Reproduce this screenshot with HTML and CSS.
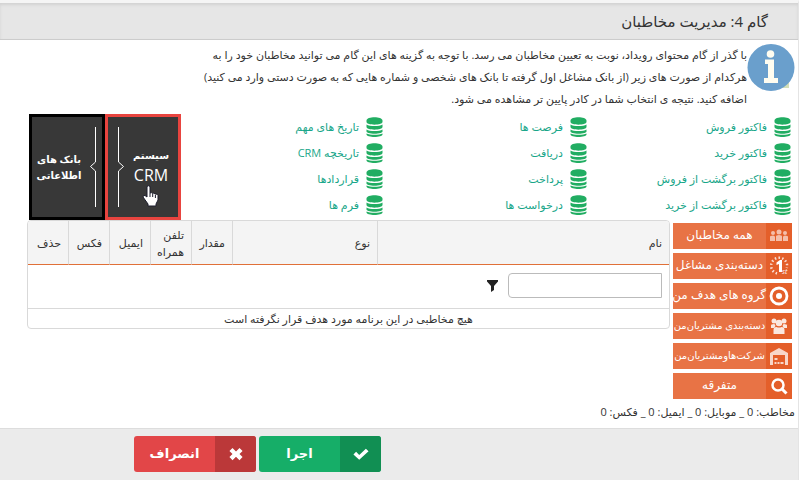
FILE: index.html
```html
<!DOCTYPE html>
<html lang="fa" dir="rtl">
<head>
<meta charset="utf-8">
<title>مدیریت مخاطبان</title>
<link rel="stylesheet" href="styles.css">
</head>
<body>
<svg class="defs" aria-hidden="true">
  <symbol id="db" viewBox="0 0 16 20">
    <path d="M0 3.500C0-1 16-1 16 3.500V5C16 8.500 0 8.500 0 5ZM0 7.500C3 9.500 13 9.500 16 7.500V10C16 13.500 0 13.500 0 10ZM0 12.500C3 14.500 13 14.500 16 12.500V14.500C16 15 15 15.800 14 16 11 17 5 17 2 16 1 15.800 0 15 0 14.500ZM0 16.500C3 18.300 13 18.300 16 16.500V17.500C16 20.800 0 20.800 0 17.500Z"/>
  </symbol>
</svg>
<div class="page">
  <header class="title-bar"><h1>گام 4: مدیریت مخاطبان</h1></header>
  <main>
    <section class="intro">
      <svg class="info" viewBox="0 0 48 48" aria-hidden="true">
        <path fill="#d3dfb8" d="M35 36h7v8h-7z"/>
        <circle cx="24" cy="23.500" r="23.500" fill="#6a9fcc"/>
        <circle cx="23.500" cy="10" r="3.800" fill="#fffdf0"/>
        <path fill="#fffdf0" d="M18 15.500h9V34h4v5H17v-5h4V20h-3z"/>
      </svg>
      <p>با گذر از گام محتوای رویداد، نوبت به تعیین مخاطبان می رسد. با توجه به گزینه های این گام می توانید مخاطبان خود را به<br>هرکدام از صورت های زیر (از بانک مشاغل اول گرفته تا بانک های شخصی و شماره هایی که به صورت دستی وارد می کنید)<br>اضافه کنید. نتیجه ی انتخاب شما در کادر پایین تر مشاهده می شود.</p>
    </section>
    <section class="sources">
      <ul class="links">
        <li><a href="#"><svg><use href="#db"/></svg>فاکتور فروش</a></li>
        <li><a href="#"><svg><use href="#db"/></svg>فاکتور خرید</a></li>
        <li><a href="#"><svg><use href="#db"/></svg>فاکتور برگشت از فروش</a></li>
        <li><a href="#"><svg><use href="#db"/></svg>فاکتور برگشت از خرید</a></li>
        <li><a href="#"><svg><use href="#db"/></svg>فرصت ها</a></li>
        <li><a href="#"><svg><use href="#db"/></svg>دریافت</a></li>
        <li><a href="#"><svg><use href="#db"/></svg>پرداخت</a></li>
        <li><a href="#"><svg><use href="#db"/></svg>درخواست ها</a></li>
        <li><a href="#"><svg><use href="#db"/></svg>تاریخ های مهم</a></li>
        <li><a href="#"><svg><use href="#db"/></svg>تاریخچه CRM</a></li>
        <li><a href="#"><svg><use href="#db"/></svg>قراردادها</a></li>
        <li><a href="#"><svg><use href="#db"/></svg>فرم ها</a></li>
      </ul>
      <div class="tiles">
        <button type="button" class="tile tile-active">
          <span>سیستم<b>CRM</b></span>
          <svg class="rule" viewBox="0 0 8 80"><path d="M1.500 0V35L6.500 39.500 1.500 44V80"/></svg>
          <svg class="hand" viewBox="0 0 17 22"><path d="M5 1.500Q6.500 0 8 1.500V8Q9.500 7 10.500 8.500 12 7.500 13 9 15 8.500 16 10.500V15L14 19V21H6V19L1 12Q1 10 3 10.500L5 12Z" fill="#fff" stroke="#1c1d2c"/><path d="M8 8v4M10.700 9v3M13.400 10v3" stroke="#1c1d2c" fill="none"/></svg>
        </button>
        <button type="button" class="tile">
          <svg class="rule" viewBox="0 0 8 80"><path d="M6.500 0V35L1.500 39.500 6.500 44V80"/></svg>
          <span>بانک های<br>اطلاعاتی</span>
        </button>
      </div>
    </section>
    <section class="audience">
      <nav class="groups">
        <button type="button"><i><svg viewBox="0 0 20 20" opacity=".6"><circle cx="4" cy="7" r="2"/><circle cx="10" cy="6" r="2.500"/><circle cx="16" cy="7" r="2"/><path d="M1 15v-4q0-1.500 3-1.500 2 0 2 1.500v4zM7 15v-4.500Q7 9 10 9t3 1.500V15zM14 15v-4q0-1.500 2-1.500 3 0 3 1.500v4z"/></svg></i><span>همه مخاطبان</span></button>
        <button type="button"><i><svg viewBox="0 0 20 20"><path d="M8 17.500A8 8 0 1 1 17.800 12" fill="none" stroke="#fff" stroke-width="2.500" stroke-dasharray="1.500 2.200" opacity=".8"/><path d="M7.500 6.500L11 4h2v12h-3V8l-2.500 1z"/><text x="13" y="18" font-size="7" direction="ltr">st</text></svg></i><span>دسته‌بندی مشاغل</span></button>
        <button type="button"><i><svg viewBox="0 0 20 20"><circle cx="10" cy="10" r="8" fill="none" stroke="#fff" stroke-width="2.800"/><circle cx="10" cy="10" r="3"/></svg></i><span>گروه های هدف من</span></button>
        <button type="button" class="small"><i><svg viewBox="0 0 20 20" opacity=".85"><circle cx="5" cy="5" r="2.500"/><circle cx="15" cy="5" r="2.500"/><circle cx="10" cy="7" r="3.300"/><path d="M2 12V9.500Q2 8 5 8q1.200 0 1.500 2L5 12zM18 12V9.500Q18 8 15 8q-1.200 0-1.500 2l1.500 2zM4.500 18v-4q0-3 3-3 2.500 1.200 5 0 3 0 3 3v4z"/></svg></i><span>دسته‌بندی مشتریان‌من</span></button>
        <button type="button" class="small"><i><svg viewBox="0 0 20 20" opacity=".75"><path d="M1 19V7l9-5 9 5v12h-3V9H4v10zM5.500 12h3v2h-3zM5.500 16h2v2h-2zM8.500 16h2v2h-2zM11.500 16h3v2h-3z"/></svg></i><span>شرکت‌هاومشتریان‌من</span></button>
        <button type="button"><i><svg viewBox="0 0 20 20"><g fill="none" stroke="#fff"><circle cx="9" cy="9" r="5.500" stroke-width="2.500"/><path d="M13 13l4.500 4.500" stroke-width="3"/></g></svg></i><span>متفرقه</span></button>
      </nav>
      <div class="grid-box">
        <table>
          <colgroup><col><col class="c-type"><col class="c-sm"><col class="c-sm"><col class="c-sm"><col class="c-sm"><col class="c-last"></colgroup>
          <thead><tr><th>نام</th><th>نوع</th><th>مقدار</th><th>تلفن همراه</th><th>ایمیل</th><th>فکس</th><th>حذف</th></tr></thead>
          <tbody>
            <tr class="filter"><td colspan="7"><div class="filter-row"><input type="text" aria-label="نام"><button type="button" aria-label="فیلتر"><svg viewBox="0 0 11 12"><path d="M0 0h11v1.500L7 6v4l-3 2V6L0 1.500z"/></svg></button></div></td></tr>
            <tr class="empty"><td colspan="7">هیچ مخاطبی در این برنامه مورد هدف قرار نگرفته است</td></tr>
          </tbody>
        </table>
      </div>
    </section>
    <p class="status">مخاطب: 0 _ موبایل: 0 _ ایمیل: 0 _ فکس: 0</p>
  </main>
  <footer>
    <button type="button" class="run"><i><svg viewBox="0 0 18 14"><path d="M3.500 4.500L7 8l7.500-7L17.500 4 7 13.500.5 7.500z"/></svg></i><span>اجرا</span></button>
    <button type="button" class="cancel"><i><svg viewBox="0 0 16 16"><path d="M4 1l4 4 4-4 3.500 3.500L12 8l3.500 3.500L12 15l-4-4-4 4-3.500-3.500L4 8 .5 4.500z"/></svg></i><span>انصراف</span></button>
  </footer>
</div>
</body>
</html>
```

FILE: styles.css
```css
* { box-sizing: border-box; }
body {
  margin: 0;
  background: #fff;
  color: #333;
  font: 12px/22px "Open Sans", "DejaVu Sans", sans-serif;
}
button, input { font: inherit; margin: 0; }
button { padding: 0; border: 0; cursor: pointer; }
p, h1, ul { margin: 0; padding: 0; }
svg { display: block; flex: none; }
.defs { position: absolute; width: 0; height: 0; }
.page {
  min-height: 100vh;
  display: flex;
  flex-direction: column;
  border-top: 3px solid #f5f5f5;
  border-right: 1px solid #e4e4e4;
}
.title-bar {
  padding: 4px 30px 4px 0;
  border-bottom: 1px solid #ccc;
  background: #e6e6e6;
  box-shadow: inset 0 2px 3px #d2d2d2;
}
h1 { font-size: 15px; line-height: 28px; font-weight: 400; }
main { flex: 1; padding: 4px 3px 0 27px; }
.intro { display: flex; height: 70px; white-space: nowrap; }
.info { width: 48px; height: 48px; }
.intro p { font-size: 11px; }
.sources { display: flex; justify-content: space-between; height: 106px; }
.links {
  display: grid;
  grid-template-rows: repeat(4, 26px);
  grid-auto-columns: 204px;
  grid-auto-flow: column;
  padding-right: 4px;
  width: 612px;
  list-style: none;
}
.links a {
  display: flex;
  align-items: center;
  gap: 7px;
  height: 26px;
  color: #18a689;
  font-size: 11px;
  text-decoration: none;
  white-space: nowrap;
}
.links svg { width: 17px; height: 20px; fill: #21ad62; }
.tiles {
  display: flex;
  flex: none;
  margin-left: 2px;
  margin-right: -100px;
}
.tile {
  position: relative;
  display: flex;
  align-items: center;
  justify-content: center;
  gap: 8px;
  width: 76px;
  border: 3px solid #000;
  background: #383838;
  color: #fff;
  font-size: 10px;
  font-weight: 700;
  line-height: 16px;
}
.tile-active { border-color: #e8443f; }
.tile b { display: block; font-size: 16px; line-height: 24px; font-weight: 400; }
.rule { width: 8px; height: 80px; fill: none; stroke: #fff; }
.hand { position: absolute; left: 34px; top: 68px; width: 17px; height: 22px; }
.audience { display: flex; gap: 3px; padding-right: 3px; }
.groups { display: flex; flex-direction: column; gap: 4px; width: 119px; padding-top: 3px; flex: none; }
.groups button {
  display: flex;
  height: 26px;
  background: #e87345;
  color: #fff;
  line-height: 24px;
  font-size: 12px;
  white-space: nowrap;
}
.groups i { width: 26px; height: 26px; padding: 3px; background: #e45f2a; flex: none; }
.groups i svg { width: 20px; height: 20px; fill: #fff; }
.groups span { flex: 1; min-width: 0; }
.groups .small { font-size: 10px; }
.grid-box {
  flex: 1;
  align-self: flex-start;
  border: 1px solid #d9d9d9;
  border-radius: 4px;
  overflow: hidden;
}
table { width: 100%; table-layout: fixed; border-collapse: separate; border-spacing: 0; }
.c-sm { width: 41px; }
.c-last { width: 40px; }
.c-type { width: 145px; }
th {
  height: 44px;
  padding: 2px 7px;
  background: #f4f4f4;
  border-left: 1px solid #d9d9d9;
  border-bottom: 1px solid #e07038;
  font-size: 11px;
  font-weight: 400;
  line-height: 17px;
  text-align: right;
}
th:last-child { border-left: 0; }
td { padding: 0; }
.filter td { height: 44px; border-bottom: 1px solid #d9d9d9; }
.filter-row { display: flex; align-items: center; gap: 10px; padding: 0 7px 2px; }
.filter input { width: 154px; height: 25px; border: 1px solid #bbb; border-radius: 4px 0 0 4px; }
.filter button { background: none; }
.filter button svg { width: 11px; height: 12px; fill: #222; }
.empty td { height: 19px; font-size: 11px; line-height: 19px; text-align: center; }
.status { padding: 2px 0 5px; font-size: 11px; }
footer {
  display: flex;
  justify-content: flex-end;
  gap: 3px;
  height: 52px;
  padding: 7px 0 0 134px;
  border-top: 1px solid #ddd;
  background: #ebebeb;
}
footer button { display: flex; width: 122px; height: 36px; border-radius: 3px; overflow: hidden; color: #fff; font-size: 13px; font-weight: 700; line-height: 34px; }
footer i { display: flex; align-items: center; justify-content: center; width: 41px; height: 36px; }
footer i svg { width: 16px; height: 14px; fill: #fff; }
footer span { flex: 1; }
.run { background: #16ae68; }
.run i { background: #118f53; }
.cancel { background: #e24648; }
.cancel i { background: #bb3839; }
```
